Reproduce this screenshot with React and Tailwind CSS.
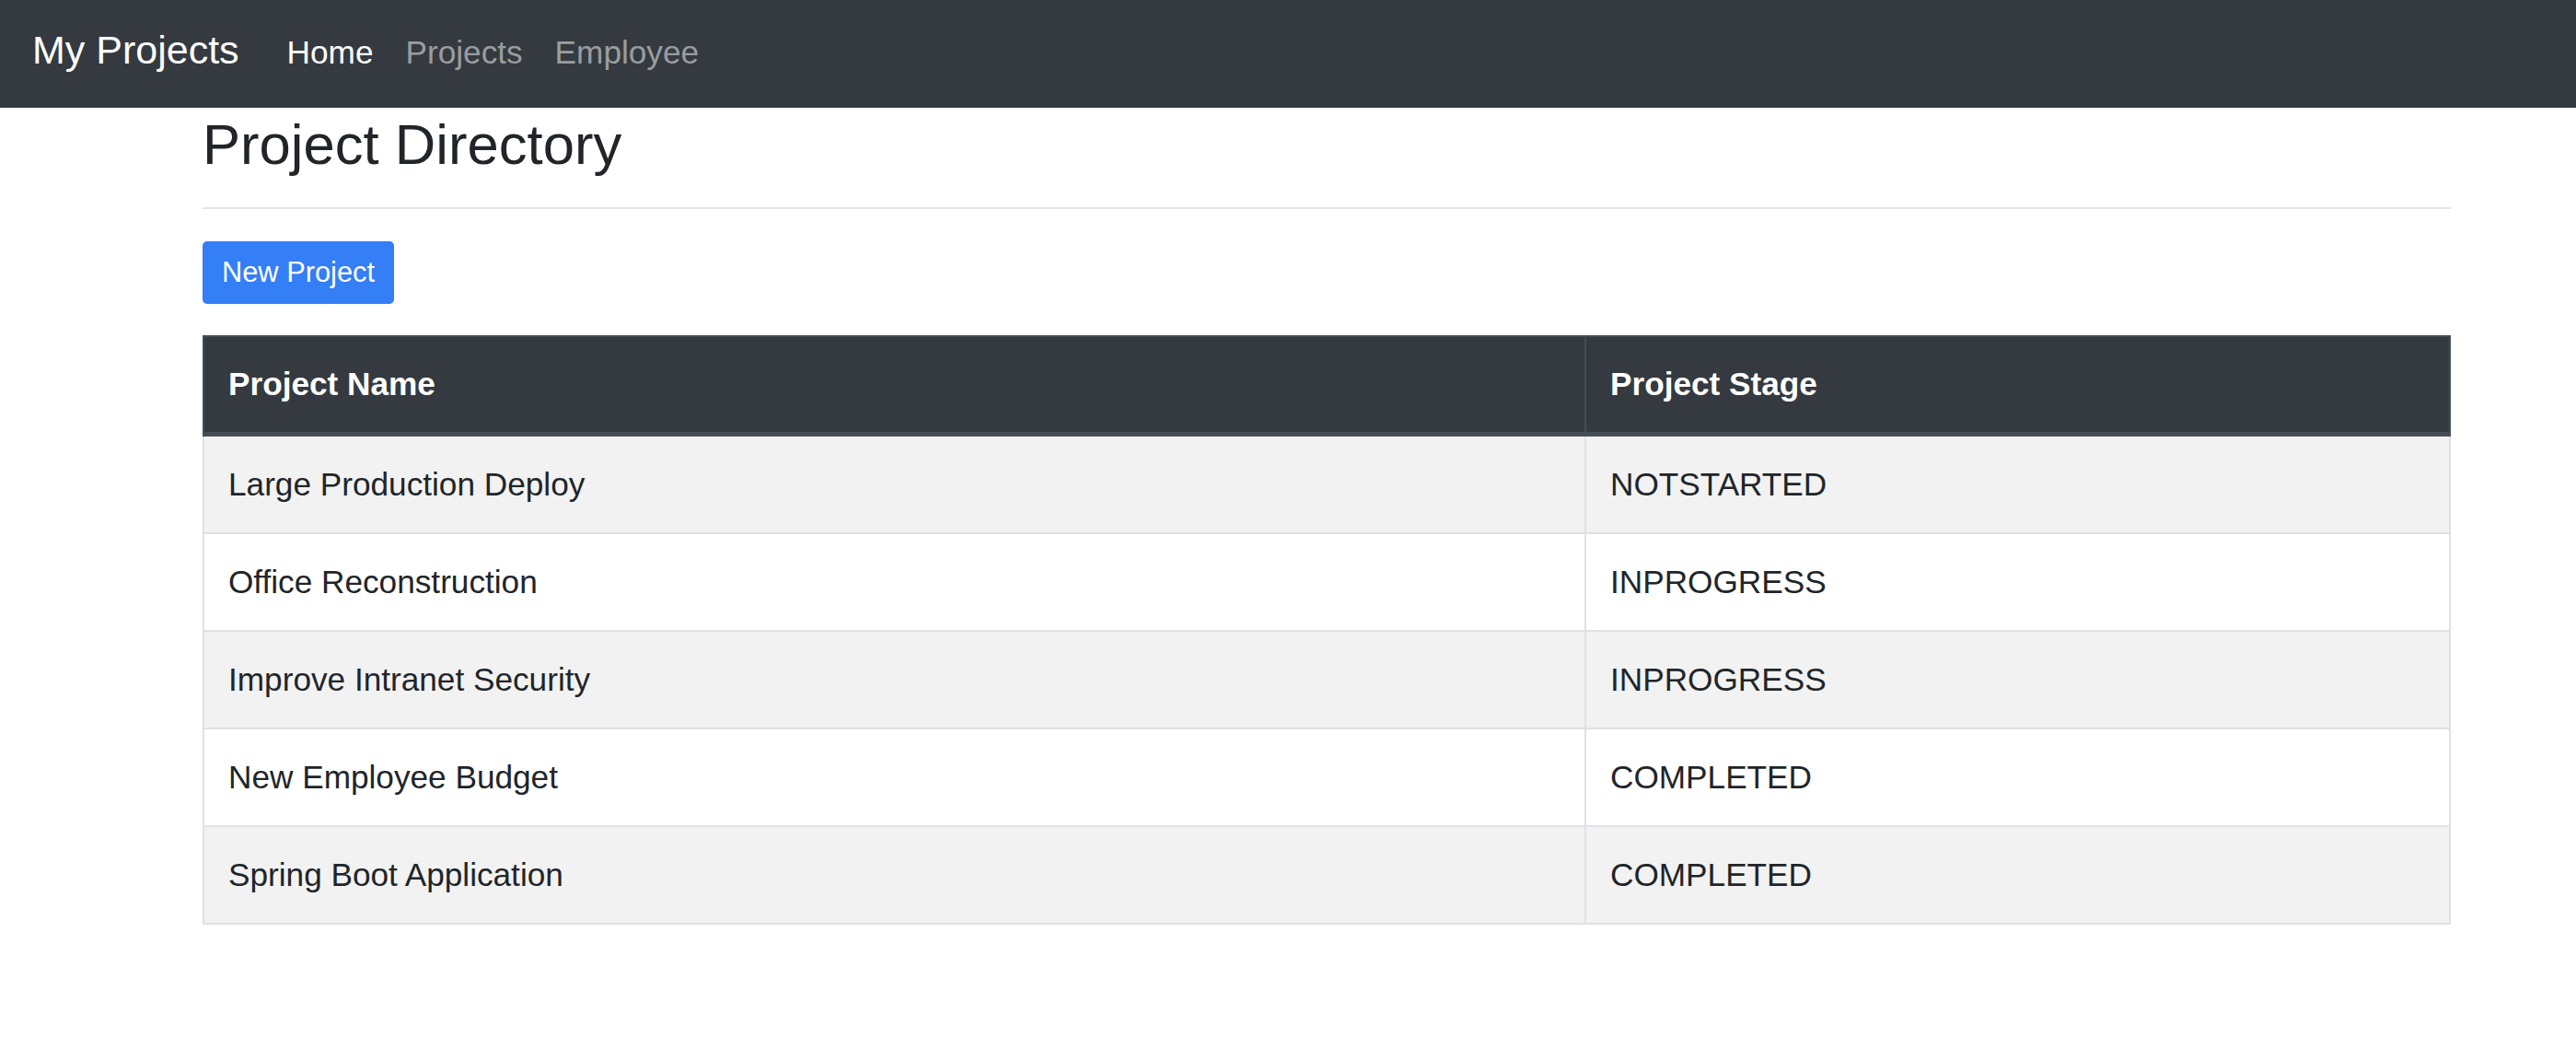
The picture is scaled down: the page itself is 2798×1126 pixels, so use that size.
import React from "react";

const projects = [
  { name: "Large Production Deploy", stage: "NOTSTARTED" },
  { name: "Office Reconstruction", stage: "INPROGRESS" },
  { name: "Improve Intranet Security", stage: "INPROGRESS" },
  { name: "New Employee Budget", stage: "COMPLETED" },
  { name: "Spring Boot Application", stage: "COMPLETED" },
];

const App = () => {
  return (
    <div className="min-h-screen bg-white font-['Liberation_Sans',Arial,sans-serif] text-[#212529]">
      {/* Navbar */}
      <nav className="h-[117px] bg-[#343a40] pl-[35px] pt-[21px] flex items-baseline">
        <a href="#" className="text-[43px] leading-[66px] text-white mr-[52px]">
          My Projects
        </a>
        <div className="flex items-baseline gap-[35px] text-[35.2px] leading-[52.8px]">
          <a href="#" className="text-white">Home</a>
          <a href="#" className="text-[#9a9da0]">Projects</a>
          <a href="#" className="text-[#9a9da0]">Employee</a>
        </div>
      </nav>

      <div className="ml-[220px] w-[2442px]">
        <h3 className="mt-[3px] text-[61.6px] leading-[74px] font-medium">Project Directory</h3>
        <hr className="mt-[31px] border-0 h-[2px] bg-[#e5e5e5]" />

        <button className="mt-[35px] w-[208px] h-[68px] rounded-[5px] bg-[#347ef6] text-white text-[30.8px] leading-[46px]">
          New Project
        </button>

        {/* Table */}
        <div className="mt-[34px]">
          <div className="grid grid-cols-[1501px_1fr] h-[110px] bg-[#343a40] border-2 border-b-[5px] border-[#454d55] text-white font-bold text-[35.2px]">
            <div className="flex items-center pl-[26px] border-r-2 border-[#454d55]">Project Name</div>
            <div className="flex items-center pl-[26px]">Project Stage</div>
          </div>
          {projects.map((p, i) => (
            <div
              key={p.name}
              className={`grid grid-cols-[1501px_1fr] h-[106px] border-x-2 border-b-2 border-[#dee2e6] text-[35.2px] ${
                i % 2 === 0 ? "bg-[#f2f2f2]" : "bg-white"
              }`}
            >
              <div className="flex items-center pl-[26px] border-r-2 border-[#dee2e6]">{p.name}</div>
              <div className="flex items-center pl-[26px]">{p.stage}</div>
            </div>
          ))}
        </div>
      </div>
    </div>
  );
};

export default App;
